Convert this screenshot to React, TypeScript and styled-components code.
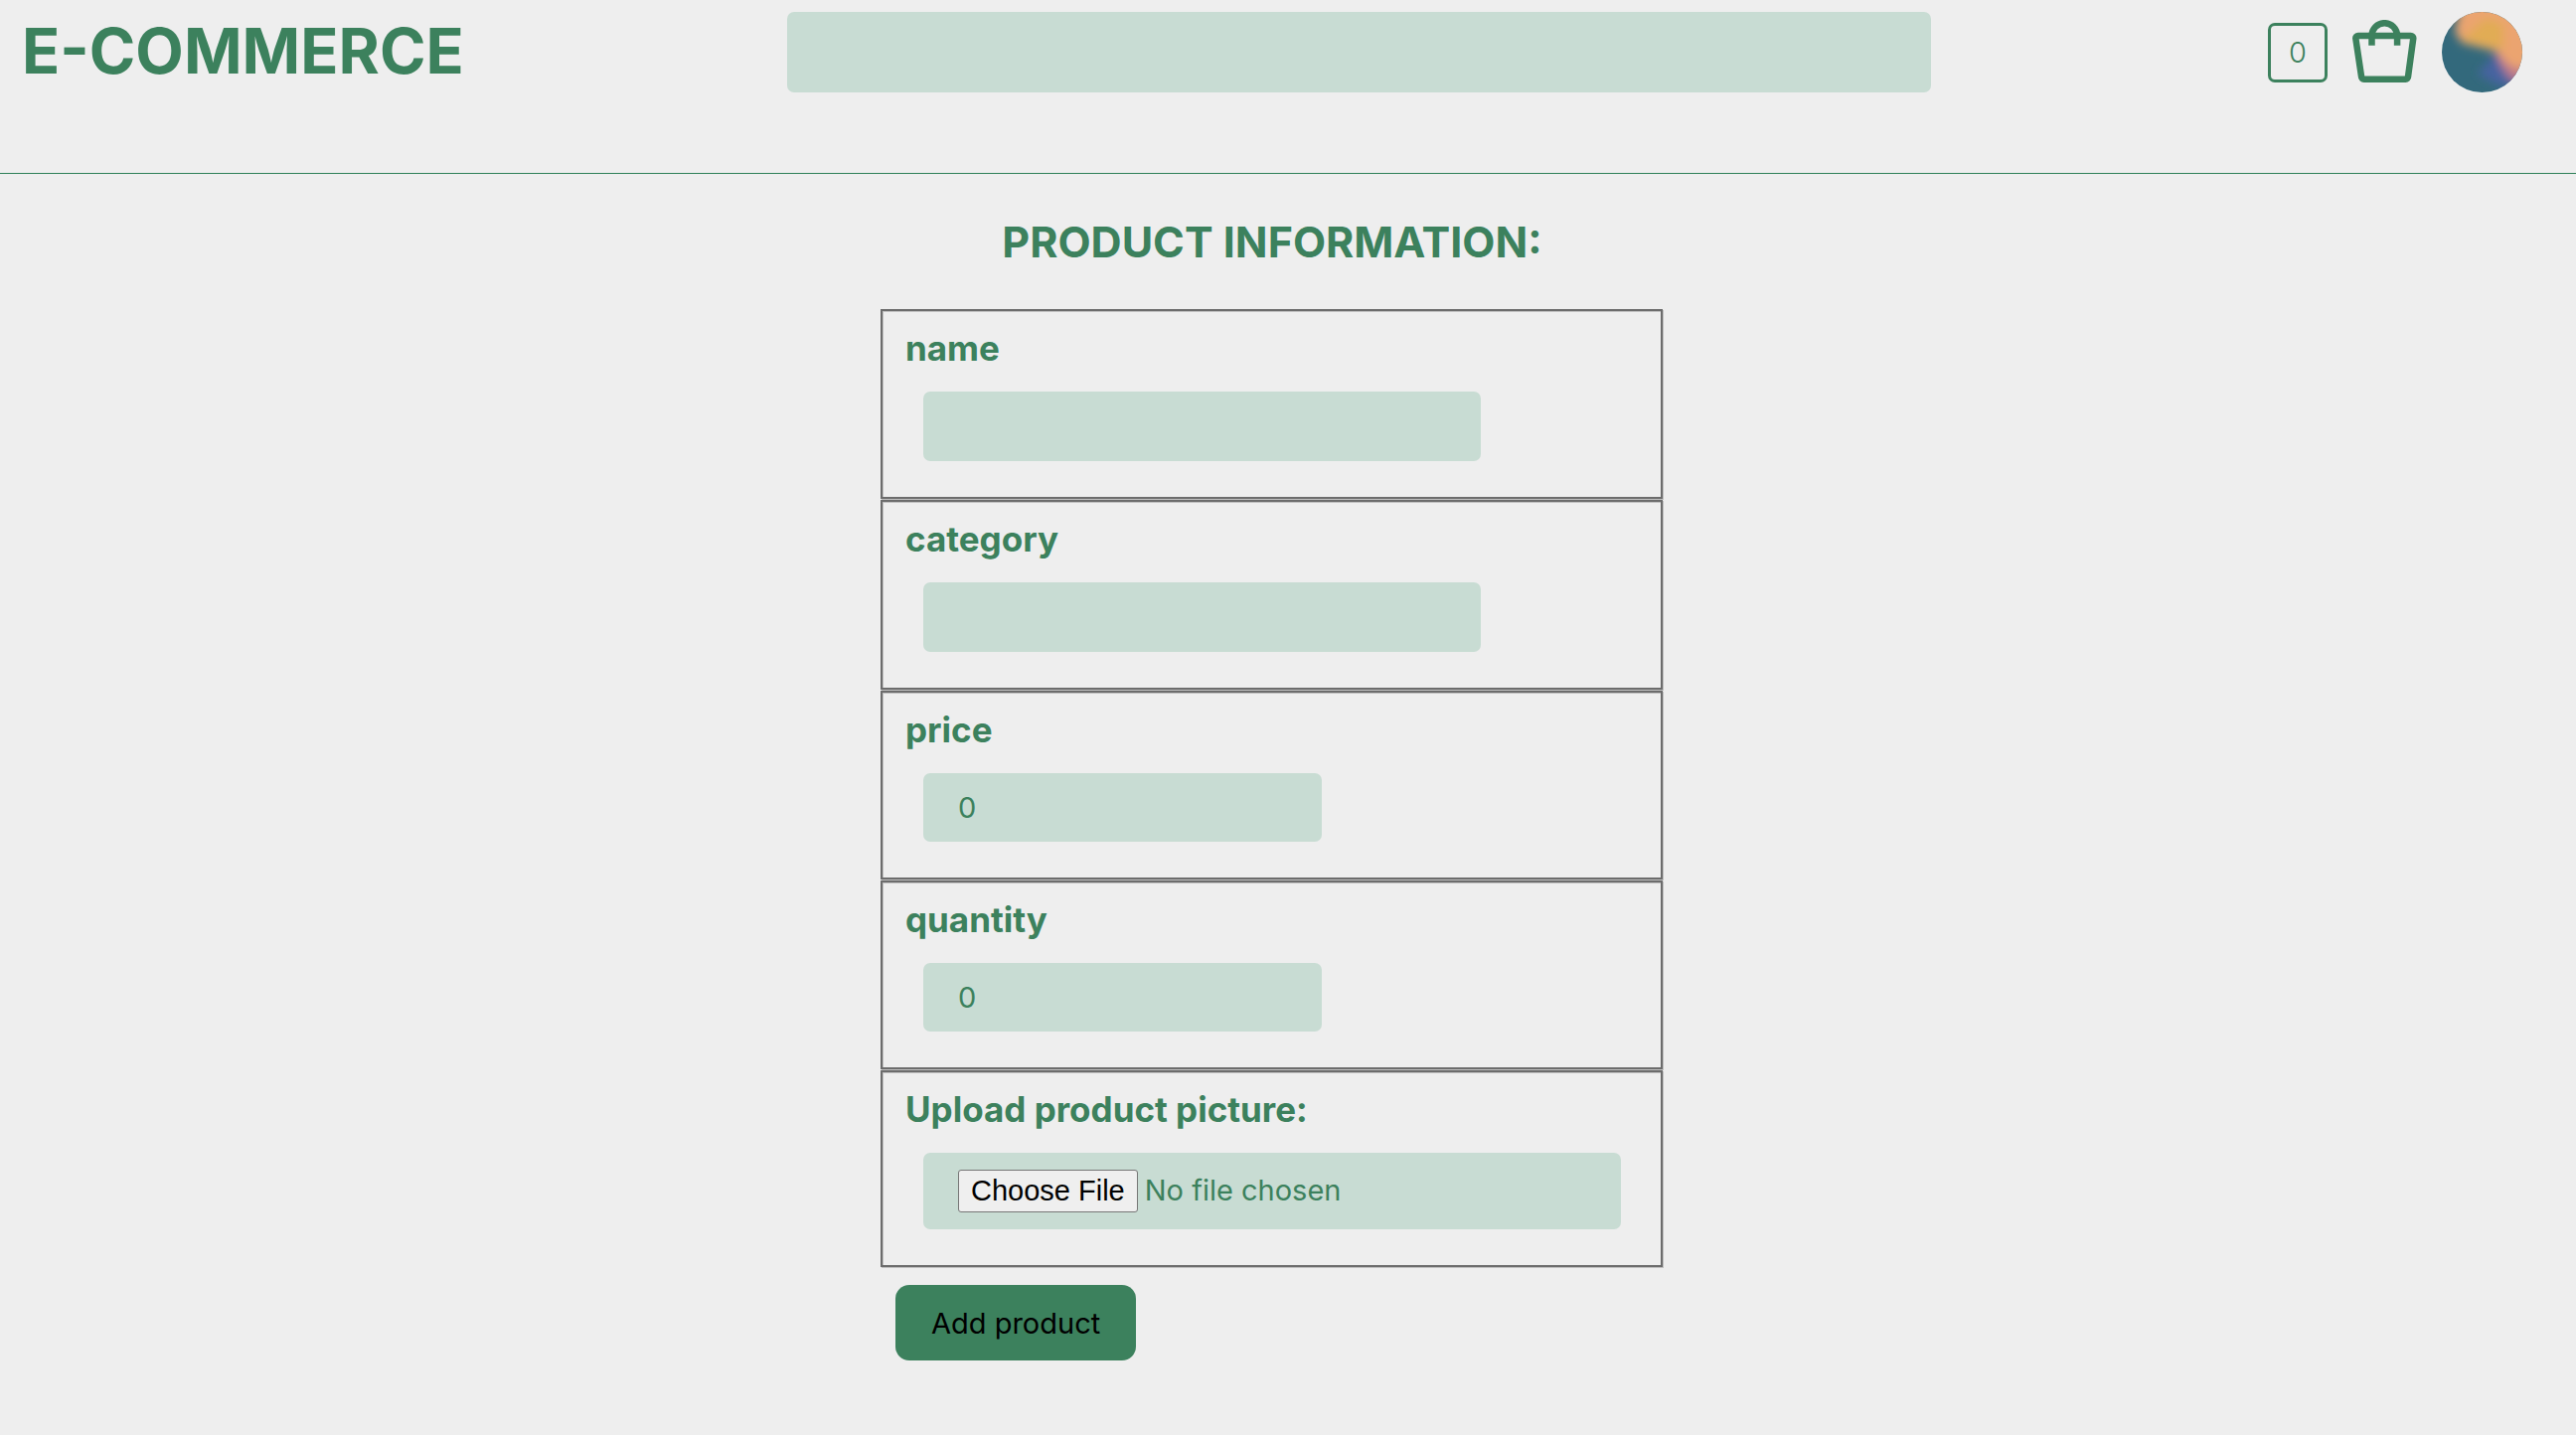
import React, { useState } from "react";
import styled, { createGlobalStyle } from "styled-components";

const green = "#3c815d";
const mint = "#c8dcd3";
const inter = `Inter, "Liberation Sans", sans-serif`;

const GlobalStyle = createGlobalStyle`
  * { box-sizing: border-box; }
  body {
    margin: 0;
    background: #eeeeee;
    color: ${green};
    font-family: ${inter};
  }
`;

const Header = styled.header`
  display: grid;
  grid-template-columns: 770fr 1151fr 595fr;
  align-items: start;
  padding: 12px 54px 81px 22px;
  border-bottom: 1px solid #2e8058;
`;

const Brand = styled.h1`
  margin: 0;
  font-size: 63px;
  line-height: 78px;
  font-weight: 700;
`;

const Search = styled.input`
  width: 100%;
  height: 81px;
  padding: 0 35px;
  border: none;
  border-radius: 7px;
  background: ${mint};
  color: ${green};
  font: 400 29px ${inter};
`;

const Actions = styled.div`
  display: flex;
  align-items: center;
  justify-content: flex-end;
  gap: 25px;
`;

const CartCount = styled.span`
  display: flex;
  align-items: center;
  justify-content: center;
  width: 60px;
  height: 60px;
  border: 3px solid ${green};
  border-radius: 7px;
  font-size: 29px;
  font-weight: 300;
`;

const IconButton = styled.button`
  display: flex;
  padding: 0;
  border: none;
  background: none;
  color: inherit;
`;

const Main = styled.main`
  display: flex;
  justify-content: center;
  padding: 41px 32px 72px 0;
`;

const ProductForm = styled.form`
  width: 788px;
  max-width: 100%;
`;

const Title = styled.h2`
  margin: 0 0 41px;
  font-size: 43px;
  line-height: 54px;
  font-weight: 700;
  text-align: center;
`;

/* Etched frame: a dark line with a light edge on its lower right side. */
const Field = styled.div`
  display: flex;
  flex-direction: column;
  align-items: flex-start;
  gap: 22px;
  margin: 0 1px 1px 0;
  padding: 15px 22px 36px 23px;
  border: 2px solid #6c6c6c;
  box-shadow: 1px 1px 0 #c0c0c0, inset 1px 1px 0 #c0c0c0;
`;

const Label = styled.label`
  font-size: 35px;
  line-height: 44px;
  font-weight: 700;
`;

const Input = styled.input<{ $width: number }>`
  width: ${(p) => p.$width}px;
  max-width: 100%;
  height: 70px;
  margin-left: 18px;
  padding: 0 35px;
  border: none;
  border-radius: 7px;
  background: ${mint};
  color: ${green};
  font: 400 29px ${inter};
`;

const NumberInput = styled(Input)`
  height: 69px;
  appearance: textfield;
`;

const FileInput = styled(Input)`
  height: 77px;
  padding: 17px 35px;

  &::file-selector-button {
    height: 43px;
    margin: 0 7px 0 0;
    padding: 0 12px;
    border: 1px solid #767676;
    border-radius: 3px;
    background: #efefef;
    color: #000;
    font: 400 29px "Liberation Sans", Arial, sans-serif;
  }
`;

const Submit = styled.button`
  height: 76px;
  margin: 17px 0 0 15px;
  padding: 0 36px;
  border: none;
  border-radius: 14px;
  background: ${green};
  color: #000;
  font: 400 29px ${inter};
`;

const BagIcon = () => (
  <svg width="65" height="65" viewBox="0 0 65 65" fill="none" stroke="currentColor" strokeWidth="6.5" aria-hidden="true">
    <path d="M3.3 18.5a2.5 2.5 0 0 1 2.5-2.6h53a2.5 2.5 0 0 1 2.5 2.6L56 57.2a2.5 2.5 0 0 1-2.5 2.5H11.6a2.5 2.5 0 0 1-2.5-2.5z" />
    <path d="M19.5 25.7V16a12.8 12.8 0 0 1 25.6 0v9.7" />
  </svg>
);

const Avatar = () => (
  <svg width="81" height="81" viewBox="0 0 81 81" aria-hidden="true">
    <defs>
      <clipPath id="avatar-clip">
        <circle cx="40.5" cy="40.5" r="40.5" />
      </clipPath>
      <filter id="avatar-blur" x="-50%" y="-50%" width="200%" height="200%">
        <feGaussianBlur stdDeviation="5" />
      </filter>
    </defs>
    <g clipPath="url(#avatar-clip)">
      <rect width="81" height="81" fill="#33697c" />
      <g filter="url(#avatar-blur)">
        <path d="M36 62L54 42L90 56V78L56 74z" fill="#4663a0" />
        <path d="M54 40L90 30V66L74 71Q62 64 54 40z" fill="#bd7a8a" />
        <path d="M13 20L20-12H95V50L78 58Q64 54 56 40Q40 36 20 31z" fill="#eba46f" />
        <path d="M20 28L44 6L62 12L62 38L40 34z" fill="#e1ac54" />
      </g>
    </g>
  </svg>
);

const fields = [
  { id: "name", type: "text", width: 561, initial: "" },
  { id: "category", type: "text", width: 561, initial: "" },
  { id: "price", type: "number", width: 401, initial: "0" },
  { id: "quantity", type: "number", width: 401, initial: "0" },
];

export default function App() {
  const [values, setValues] = useState<Record<string, string>>(
    Object.fromEntries(fields.map((f) => [f.id, f.initial]))
  );

  return (
    <>
      <GlobalStyle />
      <Header>
        <Brand>E-COMMERCE</Brand>
        <Search type="search" aria-label="Search" />
        <Actions>
          <CartCount>0</CartCount>
          <IconButton type="button" aria-label="Cart">
            <BagIcon />
          </IconButton>
          <IconButton type="button" aria-label="Account">
            <Avatar />
          </IconButton>
        </Actions>
      </Header>
      <Main>
        <ProductForm onSubmit={(e) => e.preventDefault()}>
          <Title>PRODUCT INFORMATION:</Title>
          {fields.map((f) => {
            const Control = f.type === "number" ? NumberInput : Input;
            return (
              <Field key={f.id}>
                <Label htmlFor={f.id}>{f.id}</Label>
                <Control
                  id={f.id}
                  type={f.type}
                  $width={f.width}
                  value={values[f.id]}
                  onChange={(e) => setValues({ ...values, [f.id]: e.target.value })}
                />
              </Field>
            );
          })}
          <Field>
            <Label htmlFor="picture">Upload product picture:</Label>
            <FileInput id="picture" type="file" $width={702} />
          </Field>
          <Submit type="submit">Add product</Submit>
        </ProductForm>
      </Main>
    </>
  );
}
